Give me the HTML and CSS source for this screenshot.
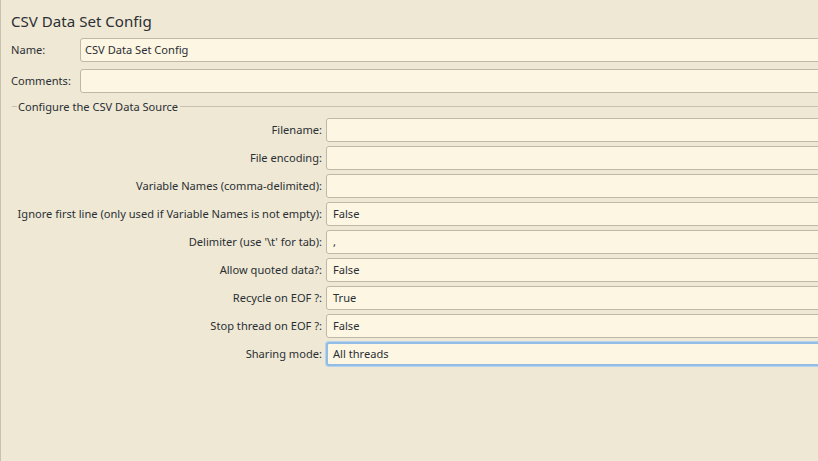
FILE: index.html
```html
<!DOCTYPE html>
<html>
<head>
<meta charset="utf-8">
<link rel="stylesheet" href="styles.css">
</head>
<body>
<div class="page">
  <h1 class="title">CSV Data Set Config</h1>
  <div class="top-form">
    <label class="top-label">Name:</label>
    <div class="field">CSV Data Set Config</div>
    <label class="top-label">Comments:</label>
    <div class="field"></div>
  </div>
  <div class="group">
    <div class="group-head"><span class="dash"></span><span class="group-title">Configure the CSV Data Source</span><span class="rule"></span></div>
    <div class="grid">
      <label class="lbl">Filename:</label><div class="field"></div>
      <label class="lbl">File encoding:</label><div class="field"></div>
      <label class="lbl">Variable Names (comma-delimited):</label><div class="field"></div>
      <label class="lbl">Ignore first line (only used if Variable Names is not empty):</label><div class="field">False</div>
      <label class="lbl">Delimiter (use '\t' for tab):</label><div class="field">,</div>
      <label class="lbl">Allow quoted data?:</label><div class="field">False</div>
      <label class="lbl">Recycle on EOF ?:</label><div class="field">True</div>
      <label class="lbl">Stop thread on EOF ?:</label><div class="field">False</div>
      <label class="lbl">Sharing mode:</label><div class="field focused">All threads</div>
    </div>
  </div>
</div>
</body>
</html>
```
FILE: styles.css
```css
html, body {
  margin: 0;
  padding: 0;
  width: 818px;
  height: 461px;
  overflow: hidden;
  background: #eee8d5;
}
body {
  font-family: "Noto Sans", "Open Sans", sans-serif;
  font-size: 11.1px;
  color: #2b2f33;
}
.page {
  box-sizing: border-box;
  height: 461px;
  border-left: 1px solid #c9c1b0;
  padding: 0 0 0 10px;
}
.title {
  margin: 0;
  padding-top: 11px;
  height: 20px;
  line-height: 20px;
  font-size: 15.1px;
  font-weight: normal;
  color: #2b2f33;
}
.top-form {
  margin-top: 7px;
  display: grid;
  grid-template-columns: 69px 760px;
  row-gap: 7px;
}
.top-label {
  line-height: 24px;
  height: 24px;
}
.field {
  box-sizing: border-box;
  height: 24px;
  line-height: 22px;
  background: #fdf6e3;
  border: 1px solid #bfb8a9;
  border-radius: 3px;
  padding: 0 6px 0 4px;
  white-space: nowrap;
}
.grid .field {
  padding-left: 6px;
}
.field.focused {
  border: 2px solid #93bde4;
  line-height: 20px;
  padding-left: 5px;
  box-shadow: 0 0 0 1px #b5d3ee;
}
.group {
  margin-top: 4px;
}
.group-head {
  display: flex;
  align-items: center;
  height: 18px;
  margin-left: 1px;
}
.dash {
  width: 5px;
  height: 1px;
  background: #c9c1b0;
  margin-right: 1px;
}
.group-title {
  color: #2b2f33;
}
.rule {
  flex: 1;
  height: 1px;
  background: #c9c1b0;
  margin-left: 2px;
}
.grid {
  margin-top: 3px;
  display: grid;
  grid-template-columns: 311px 500px;
  column-gap: 4px;
  row-gap: 4px;
}
.lbl {
  text-align: right;
  line-height: 24px;
  height: 24px;
  white-space: nowrap;
}
```
